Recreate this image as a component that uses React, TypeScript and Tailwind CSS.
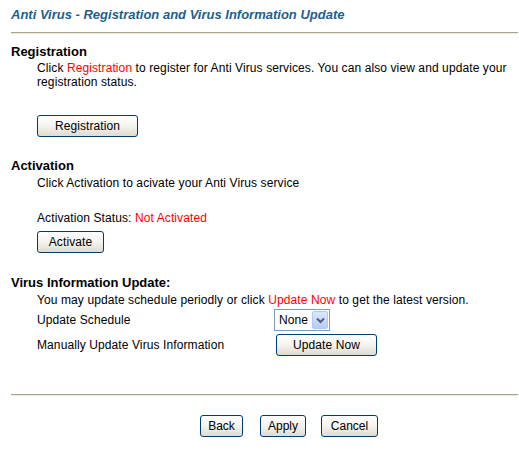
const btn =
  "h-[22px] rounded-[3px] border border-[#003c74] bg-gradient-to-b from-white via-[#f4f3ee] to-[#dedbcf] text-[12px] leading-none text-black";

function Button({ label, w }: { label: string; w: string }) {
  return (
    <button type="button" className={`${btn} ${w}`}>
      {label}
    </button>
  );
}

function Rule() {
  return (
    <div className="border-t border-b border-t-[#a8a493] border-b-[#eeebdc]" />
  );
}

function ScheduleSelect() {
  return (
    <div className="flex h-[22px] w-[56px] items-center border border-[#7f9db9] bg-white pl-[4px] pr-[1px]">
      <span className="flex-1 text-[12px] leading-none">None</span>
      <span className="flex h-[18px] w-[16px] items-center justify-center rounded-[2px] border border-[#b3c8f0] bg-gradient-to-b from-[#dce7fd] to-[#b7cbf6]">
        <svg width="9" height="7" viewBox="0 0 9 7">
          <path d="M1 1.5 L4.5 5 L8 1.5" fill="none" stroke="#4d6185" strokeWidth="2" />
        </svg>
      </span>
    </div>
  );
}

export default function App() {
  return (
    <div className="w-[519px] bg-white pl-[11px] pr-[1px] pt-[7px] text-[12px] leading-[14px] text-black [font-family:'Liberation_Sans',Arial,sans-serif]">
      <h1 className="text-[13px] font-bold italic leading-[16px] text-[#1e5f8c]">
        Anti Virus - Registration and Virus Information Update
      </h1>
      <div className="mt-[9px]">
        <Rule />
      </div>

      <h2 className="mt-[10px] text-[13px] font-bold leading-[16px]">Registration</h2>
      <div className="pl-[26px] tracking-[0.1px]">
        <div className="mt-[1px]">
          <p className="whitespace-nowrap">
            Click <span className="text-[#ff0000]">Registration</span> to register for Anti Virus services. You can
            also view and update your
          </p>
          <p>registration status.</p>
        </div>
        <div className="mt-[26px]">
          <Button label="Registration" w="w-[101px]" />
        </div>
      </div>

      <h2 className="mt-[21px] text-[13px] font-bold leading-[16px]">Activation</h2>
      <div className="pl-[26px] tracking-[0.1px]">
        <p className="mt-[2px]">Click Activation to acivate your Anti Virus service</p>
        <p className="mt-[21px]">
          Activation Status: <span className="text-[#ff0000]">Not Activated</span>
        </p>
        <div className="mt-[6px]">
          <Button label="Activate" w="w-[67px]" />
        </div>
      </div>

      <h2 className="mt-[22px] text-[13px] font-bold leading-[16px]">Virus Information Update:</h2>
      <div className="pl-[26px] tracking-[0.1px]">
        <p className="mt-[2px] whitespace-nowrap">
          You may update schedule periodly or click <span className="text-[#ff0000]">Update Now</span> to get the latest
          version.
        </p>
        <div className="mt-[2px] grid grid-cols-[237px_1fr] items-center gap-y-[3px]">
          <span>Update Schedule</span>
          <ScheduleSelect />
          <span>Manually Update Virus Information</span>
          <div className="pl-[2px]">
            <Button label="Update Now" w="w-[101px]" />
          </div>
        </div>
      </div>

      <div className="mt-[38px]">
        <Rule />
      </div>
      <div className="flex pb-[19px] pl-[189px] pt-[19px]">
        <Button label="Back" w="w-[43px]" />
        <div className="ml-[17px]">
          <Button label="Apply" w="w-[46px]" />
        </div>
        <div className="ml-[15px]">
          <Button label="Cancel" w="w-[57px]" />
        </div>
      </div>
    </div>
  );
}
